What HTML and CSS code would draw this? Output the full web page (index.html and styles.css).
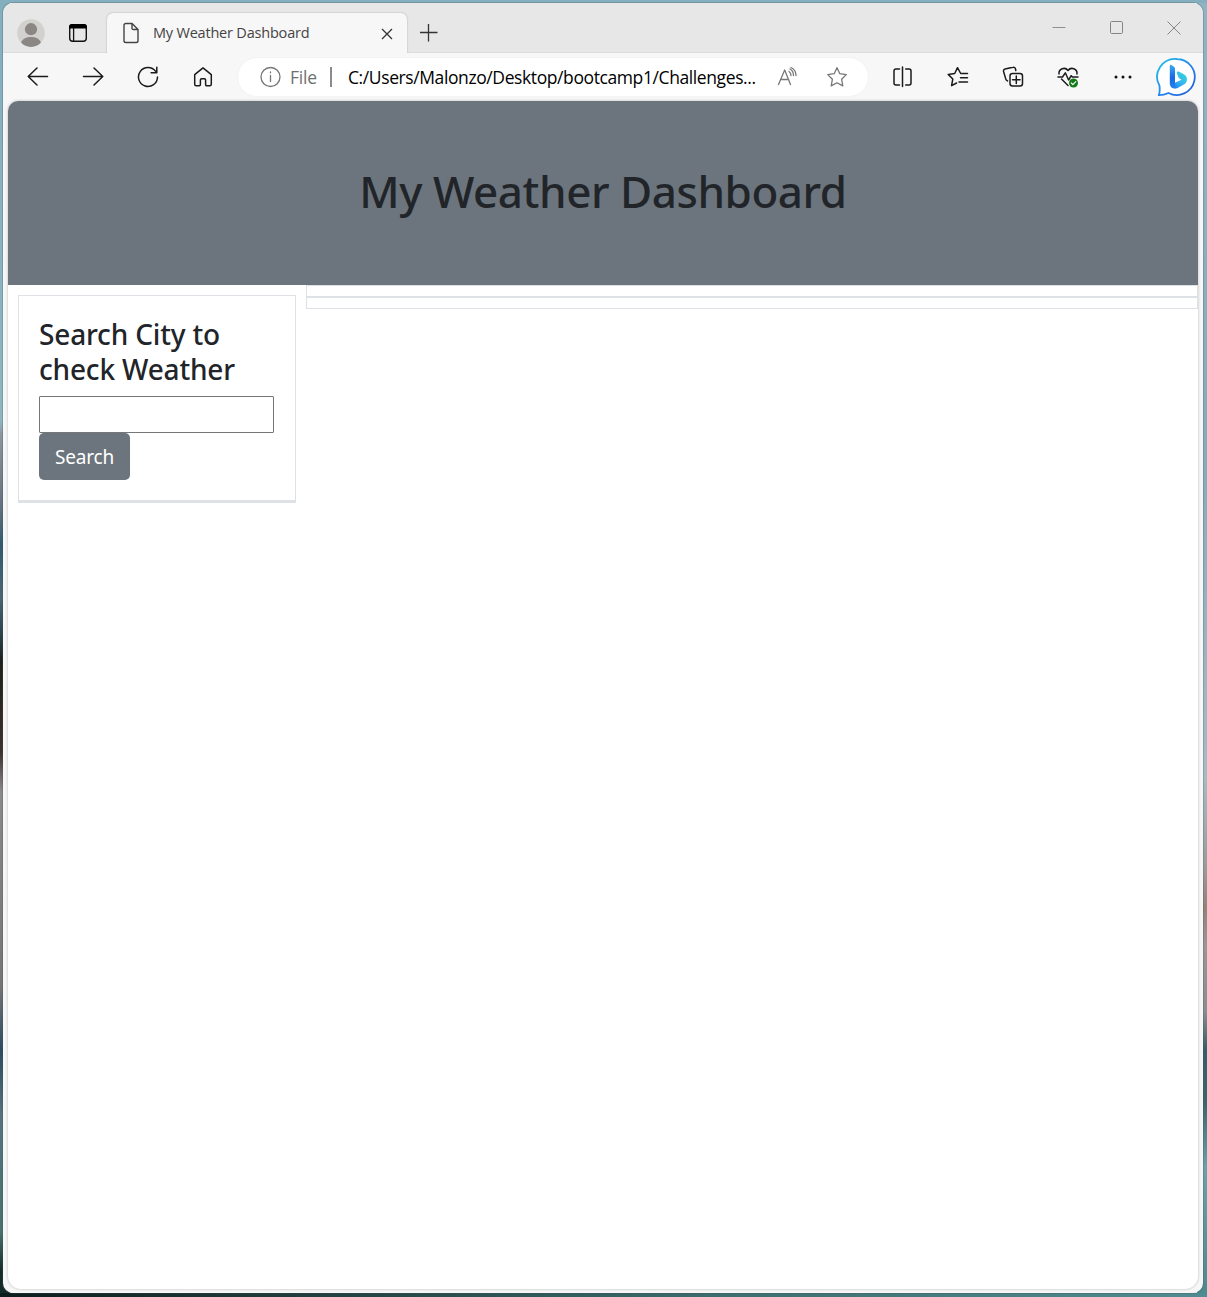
FILE: index.html
```html
<!DOCTYPE html>
<html lang="en">
<head>
<meta charset="utf-8">
<title>My Weather Dashboard</title>
<link rel="stylesheet" href="styles.css">
</head>
<body>
<div class="desktop">
  <div class="window">
    <div class="titlebar">
      <svg class="avatar" width="28" height="28" viewBox="0 0 28 28"><circle cx="14" cy="14" r="13.8" fill="#d3d1ce"/><circle cx="14" cy="10.2" r="6.1" fill="#8a8785"/><path d="M4 23.6a10.3 7.5 0 0 1 20 0A13.8 13.8 0 0 1 4 23.6z" fill="#8a8785"/></svg>
      <svg class="tabs-icon" width="20" height="20" viewBox="0 0 20 20"><rect x="1.7" y="1.7" width="16.6" height="16.6" rx="3" fill="none" stroke="#111" stroke-width="1.4"/><path d="M1 5.5V4a3 3 0 0 1 3-3h12a3 3 0 0 1 3 3v1.5z"/><path d="M5.6 5v13" stroke="#111" stroke-width="1.3"/></svg>
      <div class="tab">
        <svg width="18" height="22" viewBox="0 0 18 22" fill="none" stroke="#444" stroke-width="1.4" stroke-linejoin="round"><path d="M3.8 1.5h6.3l5.9 6v11.2a1.8 1.8 0 0 1-1.8 1.8H3.8A1.8 1.8 0 0 1 2 18.7V3.3a1.8 1.8 0 0 1 1.8-1.8zM10 1.5v4.700a1.300 1.300 0 0 0 1.300 1.300H16"/></svg>
        <span class="tab-title">My Weather Dashboard</span>
        <svg class="tab-close" width="12" height="12" viewBox="0 0 12 12" stroke="#333" stroke-width="1.3"><path d="M1 1l10 10M11 1L1 11"/></svg>
      </div>
      <svg class="plus" width="18" height="18" viewBox="0 0 18 18" stroke="#333" stroke-width="1.3"><path d="M0 8.500h17.500M8.500 0v17.500"/></svg>
      <div class="controls">
        <svg width="14" height="14" viewBox="0 0 14 14" stroke="#909090"><path d="M.5 6.500h13"/></svg>
        <svg width="14" height="14" viewBox="0 0 14 14" fill="none" stroke="#858585"><rect x=".5" y=".5" width="12" height="12" rx="1.200"/></svg>
        <svg width="14" height="14" viewBox="0 0 14 14" stroke="#858585"><path d="M.5.5l13 13M13.500.5l-13 13"/></svg>
      </div>
    </div>
    <div class="toolbar">
      <div class="nav">
        <svg width="22" height="22" viewBox="0 0 22 22"><path d="M20.500 10.500H1.200M10 2L1.200 10.500 10 19"/></svg>
        <svg width="22" height="22" viewBox="0 0 22 22"><path d="M1.500 10.500h19.300M12 2l8.800 8.500L12 19"/></svg>
        <svg width="22" height="22" viewBox="0 0 22 22"><path d="M20.500 11A9.500 9.500 0 1 1 18.700 5.400M19.800 1.200v5.600h-5.700"/></svg>
        <svg width="22" height="22" viewBox="0 0 22 22"><path d="M2.700 8.700L11 1.900l8.300 6.800v9.500a1.500 1.500 0 0 1-1.500 1.500h-3.100a1.100 1.100 0 0 1-1.100-1.100v-4.700a1.200 1.200 0 0 0-1.200-1.200H9.600a1.200 1.200 0 0 0-1.200 1.200v4.700a1.100 1.100 0 0 1-1.100 1.100H4.200a1.500 1.500 0 0 1-1.500-1.500z"/></svg>
      </div>
      <div class="address">
        <svg class="info" width="22" height="22" viewBox="0 0 22 22"><circle cx="11.500" cy="11" r="9.500"/><path d="M11.500 9.500v6M11.500 6v.8"/></svg>
        <span class="scheme">File</span>
        <span class="divider"></span>
        <span class="url">C:/Users/Malonzo/Desktop/bootcamp1/Challenges...</span>
        <svg class="read" width="22" height="22" viewBox="0 0 22 22"><path d="M1.500 18.500L7.700 4l5.800 14.500M3.700 13.500h7.900M12 5.500q2 1.300 2 4M13 3q3.500 2 3.500 6.500M14 1.500q5 2.500 5 8"/></svg>
        <svg class="star" width="22" height="22" viewBox="0 0 22 22"><path d="M11 1.700l2.800 6 6.500.9-4.700 4.600 1.200 6.700L11 16.700l-5.800 3.200 1.200-6.700L1.700 8.600l6.500-.9z"/></svg>
      </div>
      <div class="actions">
        <svg width="22" height="22" viewBox="0 0 22 22"><path d="M7.500 3H4a2 2 0 0 0-2 2v12a2 2 0 0 0 2 2h3.500M13.700 3H17a2 2 0 0 1 2 2v12a2 2 0 0 1-2 2h-3.300M10.500 1v19.500"/></svg>
        <svg width="22" height="22" viewBox="0 0 22 22"><path d="M20.500 7.500h-6.800L10.500 1.700 7.700 7.500l-6.500.9 4.600 4.600-1.200 6.700 5-2.700M13.500 11.800h7M12 15.900h8.500"/></svg>
        <svg width="22" height="22" viewBox="0 0 22 22"><rect x="8" y="7.500" width="12.500" height="12.500" rx="2.500"/><path d="M14.300 10v7.500M10.500 13.700h7.600M5.500 14.900l-.7-.5a2 2 0 0 1-1-1.300L1.500 5.200A2 2 0 0 1 3 3l8-1.700a2 2 0 0 1 2.500 1.600l.3 1.600"/></svg>
        <svg width="22" height="22" viewBox="0 0 22 22"><path d="M2 8A5 5 0 0 1 11 4.500 5 5 0 0 1 20 8M1 11h4.500l2.800-4.200 3.300 7.200 2.600-4.300 1.200 1.300H21M4.500 13l6.500 6.500"/><circle cx="16.500" cy="17" r="4.500" fill="#137a18" stroke="none"/><path d="M14.300 17l1.600 1.600 2.900-3" stroke="#fff" stroke-width="1.100"/></svg>
        <svg width="22" height="22" viewBox="0 0 22 22"><g fill="#111" stroke="none"><circle cx="4" cy="11" r="1.500"/><circle cx="11" cy="11" r="1.500"/><circle cx="18" cy="11" r="1.500"/></g></svg>
      </div>
      <svg class="bing" width="42" height="42" viewBox="0 0 42 42">
        <defs>
          <linearGradient id="ring" x1="0" y1="0" x2="1" y2="1"><stop offset="0" stop-color="#20c5e5"/><stop offset=".5" stop-color="#2588ef"/><stop offset="1" stop-color="#2356d8"/></linearGradient>
          <linearGradient id="stem" x1="0" y1="0" x2="0" y2="1"><stop offset="0" stop-color="#39a9f5"/><stop offset=".55" stop-color="#1767e2"/><stop offset="1" stop-color="#2383ee"/></linearGradient>
          <linearGradient id="bowl" x1="0" y1="1" x2="1" y2="0"><stop offset="0" stop-color="#1878ec"/><stop offset=".5" stop-color="#35b8f1"/><stop offset="1" stop-color="#35d8cf"/></linearGradient>
        </defs>
        <path d="M22 3a18 18 0 1 1-8.500 34Q9 39.200 3.700 39.200q1.500-2.500 .8-9.400A18 18 0 0 1 22 3z" fill="#fff" stroke="url(#ring)" stroke-width="1.800"/>
        <path d="M19.500 27l7-3.300-2.700-1.600-2-4.800q-.4-2.300 1.900-1.700l5 2.600a5.800 5.800 0 0 1 1 9.800l-7 4q-3.500 1-6-1.200z" fill="url(#bowl)" stroke="none"/>
        <path d="M14.800 9.800q.2-1.500 1.700-.8l2.700 2q.8.700.8 1.700v15.300q0 3 1.500 4.200-5.700 1.200-6.700-4z" fill="url(#stem)" stroke="none"/>
      </svg>
    </div>
    <main class="page">
      <header class="hero"><h1>My Weather Dashboard</h1></header>
      <div class="content">
        <aside class="search-card">
          <h2>Search City to<br>check Weather</h2>
          <input class="city" type="text" aria-label="City">
          <button class="search-btn" type="button">Search</button>
        </aside>
        <section class="results"><div class="result"></div><div class="result"></div></section>
      </div>
    </main>
  </div>
</div>
</body>
</html>
```
FILE: styles.css
```css
* { box-sizing: border-box; }
body { margin: 0; font-family: "Noto Sans", "Open Sans", sans-serif; }
svg { display: block; flex: none; }

.desktop {
  width: 1207px;
  height: 1297px;
  padding: 3px 4px 4px 3px;
  background:
    linear-gradient(#85afbe, #85afbe) top / 100% 3px no-repeat,
    linear-gradient(90deg, #0c1d1c, #203e3d 25%, #3d6e70 60%, #508c91) bottom / 100% 4px no-repeat,
    linear-gradient(#83afbf, #8eb5c0 32.500%, #8c959e 33.500%, #65727d 39%, #305a70 42%, #496773 46%, #243a40 49.500%, #1d2019 51%, #3e302f 58%, #8d8889 61%, #777476 76%, #2b4b60 81%, #54757c 86%, #48716f 95%, #142c28 98%) left / 10px 100% no-repeat,
    linear-gradient(#91b4c4, #86abba 35%, #a7bbc2 60%, #9b9a99 67%, #928378 70%, #9b9696 73%, #8b8c8f 78%, #365e66 81%, #3c666b 85%, #6ca2a7 90%, #4b898c) right / 10px 100% no-repeat;
}
.window {
  display: flex;
  flex-direction: column;
  height: 1290px;
  border-radius: 10px;
  background: #f7f7f7;
  overflow: hidden;
  box-shadow: 0 0 0 1px rgba(60, 80, 85, .25);
}

.titlebar {
  display: flex;
  height: 50px;
  background: #e7e7e7;
  box-shadow: inset 0 -1px #dcdcdc;
}
.avatar { margin: 16px 0 0 14px; }
.tabs-icon { margin: 20px 0 0 23px; }
.tab {
  display: flex;
  align-items: center;
  width: 300px;
  height: 40px;
  margin: 10px 0 0 19px;
  padding: 0 14px 1px 15px;
  border-radius: 6px 6px 0 0;
  background: #f7f7f7;
  box-shadow: 0 0 2px rgba(0, 0, 0, .28);
}
.tab-title {
  margin-left: 13px;
  font-family: "Open Sans", sans-serif;
  font-size: 14.500px;
  line-height: 22px;
  color: #444;
  letter-spacing: -.2px;
  white-space: nowrap;
}
.tab-close { margin: 3px 0 0 auto; }
.plus { margin: 21px 0 0 13px; }
.controls {
  display: flex;
  gap: 43.500px;
  margin: 18px 22px 0 auto;
}

.toolbar {
  display: flex;
  align-items: center;
  height: 48px;
  background: #f7f7f7;
  fill: none;
  stroke: #1b1b1b;
  stroke-width: 1.500;
  stroke-linecap: round;
  stroke-linejoin: round;
}
.nav { display: flex; gap: 33px; margin-left: 24px; }
.address {
  display: flex;
  align-items: center;
  width: 630px;
  height: 38px;
  margin-left: 24px;
  padding: 0 20px 0 21px;
  border-radius: 19px;
  background: #fff;
  box-shadow: 0 0 2px rgba(0, 0, 0, .06);
  stroke: #777;
  stroke-width: 1.300;
  font: 17.500px/24px "Open Sans", sans-serif;
  white-space: nowrap;
}
.scheme { width: 27px; margin-left: 9px; color: #707070; letter-spacing: -.2px; }
.divider { width: 2px; height: 20px; margin-left: 13px; background: #8b8b8b; }
.url { width: 408px; margin-left: 16px; color: #000; letter-spacing: -.4px; }
.read { margin-left: 21px; }
.star { margin-left: auto; }
.actions { display: flex; gap: 33px; margin-left: 24px; }
.bing { margin-left: 21px; }

.page {
  width: 1190px;
  height: 1188px;
  margin-left: 5px;
  border-radius: 10px 10px 13px 13px;
  background: #fff;
  overflow: hidden;
  box-shadow: 0 0 3px rgba(0, 0, 0, .25);
}
.hero {
  display: flex;
  justify-content: center;
  height: 184px;
  padding-top: 63px;
  background: #6c757d;
}
h1, h2 { margin: 0; color: #212529; font-weight: 500; white-space: nowrap; }
h1 { font-size: 44px; line-height: 54px; letter-spacing: -.45px; }
.content { display: flex; align-items: flex-start; }
.search-card {
  width: 278px;
  height: 208px;
  margin: 10px;
  padding: 21px 20px;
  border: solid #dee2e6;
  border-width: 1px 1px 3px;
}
h2 { font-size: 28px; line-height: 35px; letter-spacing: -.17px; }
.city {
  display: block;
  width: 235px;
  height: 37px;
  margin-top: 9px;
  border: 1px solid #767676;
  border-radius: 1px;
  background: #fff;
}
.search-btn {
  display: block;
  width: 91px;
  height: 47px;
  padding: 0;
  border: 0;
  border-radius: 5px;
  background: #6c757d;
  color: #fff;
  font: 19px/28px "Noto Sans", sans-serif;
  letter-spacing: -.2px;
}
.results { flex: 1; }
.result { height: 12px; border: 1px solid #dee2e6; }
```
